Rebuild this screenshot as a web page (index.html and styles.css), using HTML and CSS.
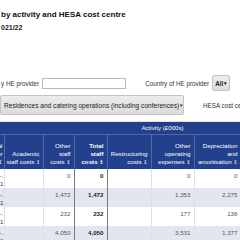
FILE: index.html
```html
<!DOCTYPE html>
<html>
<head>
<meta charset="utf-8">
<link rel="stylesheet" href="styles.css">
</head>
<body>
<div class="page">
  <h1 class="title">by activity and HESA cost centre</h1>
  <p class="subtitle">021/22</p>
  <div class="filters">
    <div class="filter-row">
      <label class="label">y HE provider</label>
      <input class="text-input" type="text">
      <label class="label country">Country of HE provider</label>
      <span class="select small">All <span class="caret">▾</span></span>
    </div>
    <div class="filter-row second">
      <span class="select wide">Residences and catering operations (including conferences) <span class="caret">▾</span></span>
      <label class="label hesa">HESA cost centre</label>
    </div>
  </div>
  <table class="data">
    <colgroup>
      <col class="c0"><col class="c1"><col class="c2"><col class="c3"><col class="c4"><col class="c5"><col class="c6"><col class="c7"><col class="c8">
    </colgroup>
    <thead>
      <tr class="group">
        <th></th>
        <th colspan="8" class="activity">Activity (£000s)</th>
      </tr>
      <tr class="heads">
        <th class="first">Total<br>expenditur<br><span class="sort">↕</span></th>
        <th>Academic<br>staff costs <span class="sort">↕</span></th>
        <th>Other<br>staff<br>costs <span class="sort">↕</span></th>
        <th class="strong">Total<br>staff<br>costs <span class="sort">↕</span></th>
        <th>Restructuring<br>costs <span class="sort">↕</span></th>
        <th>Other<br>operating<br>expenses <span class="sort">↕</span></th>
        <th>Depreciation<br>and<br>amortisation <span class="sort">↕</span></th>
        <th>Interest<br>and other<br>finance costs <span class="sort">↕</span></th>
        <th>Total<br>expenditure <span class="sort">↕</span></th>
      </tr>
    </thead>
    <tbody>
      <tr>
        <td class="name">Provider -.<br>1</td>
        <td></td><td>0</td><td class="total">0</td><td></td><td>0</td><td>0</td><td>0</td><td>0</td>
      </tr>
      <tr class="alt">
        <td class="name">Provider -.<br>1</td>
        <td></td><td>1,472</td><td class="total">1,472</td><td></td><td>1,353</td><td>2,275</td><td>12</td><td>5,112</td>
      </tr>
      <tr>
        <td class="name">Provider -.<br>1</td>
        <td></td><td>232</td><td class="total">232</td><td></td><td>177</td><td>138</td><td>0</td><td>547</td>
      </tr>
      <tr class="alt">
        <td class="name">Provider -.<br>1</td>
        <td></td><td>4,050</td><td class="total">4,050</td><td></td><td>3,531</td><td>1,377</td><td>41</td><td>9,000</td>
      </tr>
    </tbody>
  </table>
</div>
</body>
</html>
```

FILE: styles.css
```css
html, body {
  margin: 0;
  padding: 0;
  overflow: hidden;
  background: #fff;
}
body {
  width: 240px;
  height: 240px;
  font-family: "Liberation Sans", Arial, sans-serif;
  color: #222;
}
.page {
  padding: 10px 0 0 1px;
}
.title {
  margin: 0;
  font-size: 8px;
  line-height: 10px;
  font-weight: bold;
  color: #111;
  white-space: nowrap;
}
.subtitle {
  margin: 3px 0 0 0;
  font-size: 7px;
  line-height: 9px;
  font-weight: bold;
  color: #222;
}
.filters {
  margin-top: 43px;
  display: flex;
  flex-direction: column;
  gap: 4px;
}
.filter-row {
  display: flex;
  align-items: center;
  white-space: nowrap;
}
.label {
  font-size: 6.3px;
  color: #333;
}
.text-input {
  margin: 0 0 0 3px;
  width: 84px;
  height: 11px;
  box-sizing: border-box;
  border: 1px solid #b9b9b9;
  padding: 0;
  background: #fff;
}
.country {
  margin-left: 19px;
}
.select {
  display: inline-flex;
  align-items: center;
  box-sizing: border-box;
  border: 1px solid #c4c4c4;
  border-radius: 2px;
  background: linear-gradient(#ececec, #dcdcdc);
  font-size: 6.3px;
  color: #222;
}
.select.small {
  margin-left: 3px;
  height: 16px;
  padding: 0 2px;
  font-weight: bold;
}
.select.wide {
  height: 20px;
  width: 184px;
  padding: 0 3px;
  margin-left: -1px;
  font-size: 6.6px;
}
.caret {
  font-size: 5px;
  margin-left: 1px;
}
.hesa {
  margin-left: 19px;
}
.data {
  margin-top: 6px;
  margin-left: -38px;
  width: 358px;
  border-collapse: collapse;
  table-layout: fixed;
  border-top: 1px solid #e2e2e2;
  font-size: 6.2px;
}
.c0 { width: 41px; }
.c1 { width: 39px; }
.c2 { width: 31px; }
.c3 { width: 33px; }
.c4 { width: 44px; }
.c5 { width: 43px; }
.c6 { width: 47px; }
.c7 { width: 45px; }
.c8 { width: 35px; }
.data th {
  background: #22408c;
  color: #fff;
  font-weight: normal;
  text-align: right;
  padding: 0 3px 3px 2px;
  line-height: 8px;
  vertical-align: bottom;
  white-space: nowrap;
  overflow: hidden;
}
.group th {
  height: 12px;
  padding: 0;
  line-height: 12px;
  vertical-align: middle;
  border-bottom: 1px solid #4d67a8;
}
.group .activity {
  text-align: center;
}
.heads th {
  height: 31px;
  border-left: 1px solid #4d67a8;
}
.heads th.first {
  border-left: none;
  padding-right: 1px;
}
.heads th.strong { font-weight: bold; }
.sort {
  font-family: "DejaVu Sans", sans-serif;
  font-size: 5px;
}
.data td {
  text-align: right;
  vertical-align: top;
  padding: 3px 3px 0 2px;
  line-height: 8px;
  height: 16px;
  color: #555;
  border-left: 1px solid #dde0e8;
  white-space: nowrap;
  overflow: hidden;
}
.data td.name {
  border-left: none;
  color: #333;
  padding-right: 0;
}
.data td.total {
  font-weight: bold;
  color: #222;
  border-left: 1px solid #7a7a7a;
  border-right: 1px solid #7a7a7a;
}
.data tr.alt td {
  background: #e3e6ee;
}
```
